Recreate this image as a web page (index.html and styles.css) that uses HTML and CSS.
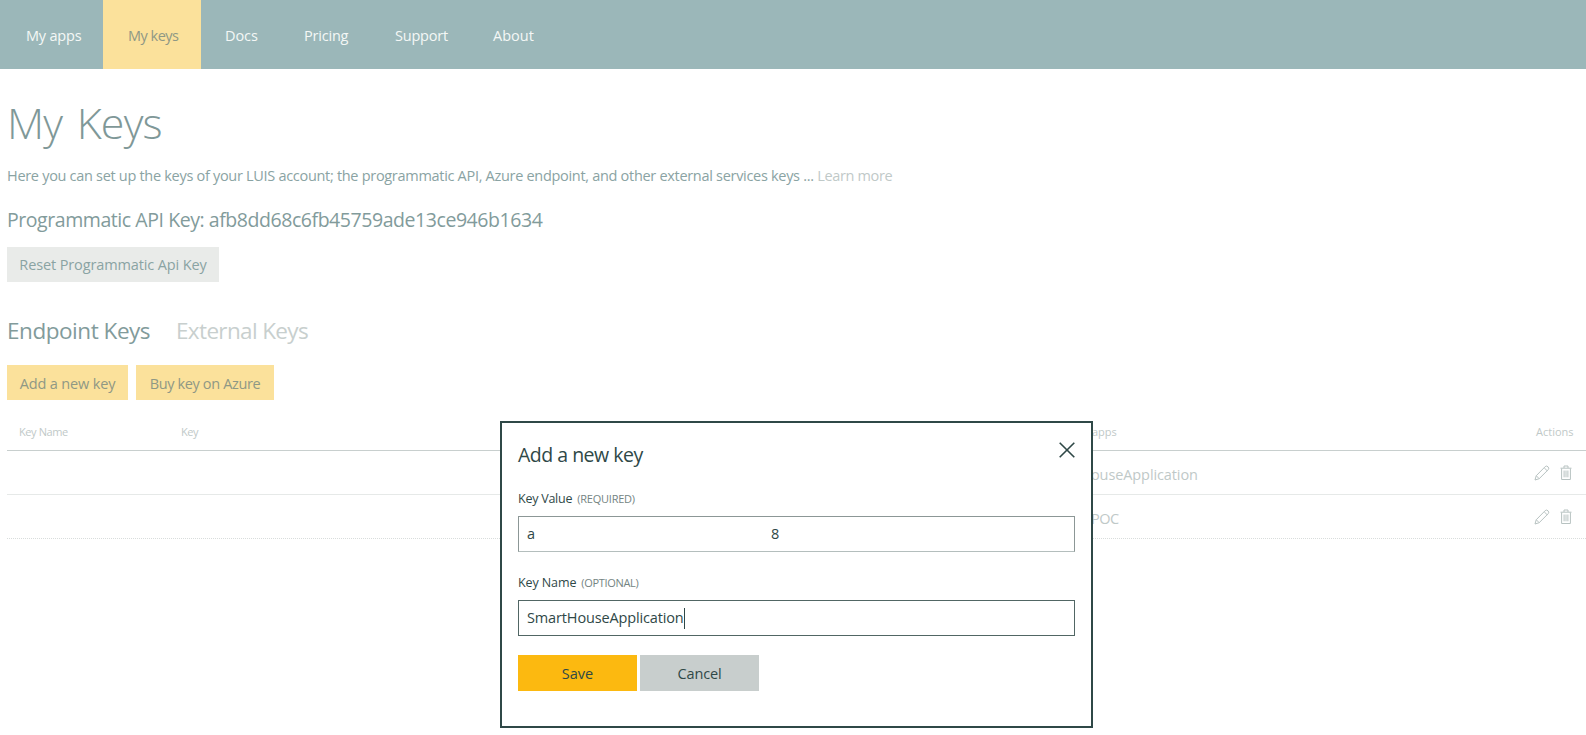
FILE: index.html
```
<!DOCTYPE html>
<html lang="en">
<head>
<meta charset="utf-8">
<title>My Keys</title>
<link rel="stylesheet" href="styles.css">
</head>
<body>
<svg class="sprite" aria-hidden="true">
  <symbol id="pencil" viewBox="0 0 16 16">
    <path d="M1 15 L2.2 10.8 L11.2 1.6 Q12.6 .4 14 1.8 Q15.4 3.2 14.3 4.6 L5.2 13.7 Z M10.2 2.8 L13.1 5.7 M2.4 10.9 L5 13.5"/>
  </symbol>
  <symbol id="trash" viewBox="0 0 12 16">
    <path d="M.5 3.2 H11.5 M4 3 V1 H8 V3 M1.6 3.5 V14.5 H10.4 V3.5 M4.1 5.5 V12.3 M6 5.5 V12.3 M7.9 5.5 V12.3"/>
  </symbol>
</svg>

<nav class="nav">
  <a class="nav-item apps">My apps</a>
  <a class="nav-item active">My keys</a>
  <a class="nav-item docs">Docs</a>
  <a class="nav-item pricing">Pricing</a>
  <a class="nav-item support">Support</a>
  <a class="nav-item about">About</a>
</nav>

<main class="page">
  <h1 class="title">My Keys</h1>
  <p class="intro">Here you can set up the keys of your LUIS account; the programmatic API, Azure endpoint, and other external services keys ... <a class="learn">Learn more</a></p>
  <h2 class="api-key">Programmatic API Key: afb8dd68c6fb45759ade13ce946b1634</h2>
  <button class="btn reset">Reset Programmatic Api Key</button>
  <div class="tabs">
    <span class="tab current">Endpoint Keys</span>
    <span class="tab external">External Keys</span>
  </div>
  <div class="buttons">
    <button class="btn add">Add a new key</button>
    <button class="btn buy">Buy key on Azure</button>
  </div>
  <div class="table">
    <div class="row head">
      <span>Key Name</span><span>Key</span><span class="assigned">apps</span><span class="actions">Actions</span>
    </div>
    <div class="row">
      <span></span><span></span><span class="app">ouseApplication</span>
      <span class="icons"><svg class="pencil"><use href="#pencil"/></svg><svg class="trash"><use href="#trash"/></svg></span>
    </div>
    <div class="row last">
      <span></span><span></span><span class="app poc">POC</span>
      <span class="icons"><svg class="pencil"><use href="#pencil"/></svg><svg class="trash"><use href="#trash"/></svg></span>
    </div>
  </div>
</main>

<section class="modal">
  <header class="modal-head">
    <h3 class="modal-title">Add a new key</h3>
    <svg class="close" viewBox="0 0 16 16"><path d="M.7 .7 L15.3 15.3 M15.3 .7 L.7 15.3"/></svg>
  </header>
  <div class="label"><b class="value-label">Key Value</b><small class="required">(REQUIRED)</small></div>
  <div class="input"><span class="first">a</span><span>8</span></div>
  <div class="label"><b class="name-label">Key Name</b><small class="optional">(OPTIONAL)</small></div>
  <div class="input focused"><span>SmartHouseApplication</span><i class="caret"></i></div>
  <div class="modal-buttons">
    <button class="btn save">Save</button>
    <button class="btn cancel">Cancel</button>
  </div>
</section>
</body>
</html>
```
FILE: styles.css
```
* { box-sizing: border-box; }

body {
  margin: 0;
  height: 735px;
  overflow: hidden;
  background: #fff;
  color: #8aa3a3;
  font: 14.5px/20px "Open Sans", "Noto Sans", sans-serif;
  white-space: nowrap;
}

h1, h2, h3, p { margin: 0; font-weight: 400; }

.sprite { display: none; }

/* Navigation */
.nav {
  display: flex;
  height: 69px;
  background: #9bb7b9;
  color: #f4f7f6;
}
.nav-item {
  display: flex;
  align-items: center;
  padding-top: 2px;
}
.apps { width: 103px; padding-left: 26px; letter-spacing: -.2px; }
.active {
  width: 98px;
  padding-left: 25px;
  background: #fbe19b;
  color: #8f9885;
  letter-spacing: -.5px;
}
.docs { width: 103px; padding-left: 24px; letter-spacing: -.1px; }
.pricing { width: 91px; letter-spacing: -.2px; }
.support { width: 98px; letter-spacing: -.22px; }
.about { letter-spacing: 0; }

/* Page */
.page { padding: 24px 0 0 7px; }
.title {
  font-size: 43px;
  font-weight: 300;
  line-height: 60px;
  letter-spacing: -.8px;
  word-spacing: 4px;
  color: #7f9898;
}
.intro { margin-top: 13px; letter-spacing: -.3px; }
.learn { color: #bfc9c8; letter-spacing: -.34px; }
.api-key {
  margin-top: 21px;
  font-size: 19.5px;
  line-height: 26px;
  letter-spacing: -.44px;
  color: #829b9b;
}

.btn {
  height: 35px;
  padding: 0;
  border: 0;
  font: inherit;
  color: inherit;
}
.reset {
  display: block;
  width: 212px;
  margin-top: 14px;
  padding-top: 1px;
  background: #e9ebe9;
  letter-spacing: -.12px;
}

.tabs {
  display: flex;
  gap: 26px;
  margin-top: 33px;
  font-size: 22.5px;
  line-height: 32px;
}
.current { width: 143px; letter-spacing: -.46px; color: #829b9b; }
.external { letter-spacing: -.64px; color: #c8cfce; }

.buttons { display: flex; gap: 8px; margin-top: 18px; }
.add, .buy { padding-top: 2px; background: #fbe19b; color: #8f9885; }
.add { width: 121px; letter-spacing: -.15px; }
.buy { width: 138px; letter-spacing: -.36px; }

/* Keys table */
.row {
  display: grid;
  grid-template-columns: 162px 905px 1fr 56px;
  align-items: center;
  height: 44px;
  padding: 2px 0 0 12px;
  border-bottom: 1px solid #e6e9e8;
  color: #bfc9c8;
}
.head {
  height: 51px;
  padding-top: 14px;
  border-bottom-color: #c8cfce;
  font-size: 11px;
  letter-spacing: -.4px;
}
.last { border-bottom: 1px dotted #d9dddc; }
.assigned { padding-left: 6px; letter-spacing: 0; }
.app { padding: 2px 0 0 5px; letter-spacing: -.1px; }
.poc { letter-spacing: -.5px; }
.actions { padding-left: 6px; letter-spacing: 0; }
.icons { display: flex; gap: 10px; align-items: center; padding: 0 0 1px 4px; }
.pencil, .trash {
  fill: none;
  stroke: #b7c2c1;
  stroke-width: 1;
  height: 16px;
}
.pencil { width: 16px; }
.trash { width: 12px; }

/* Dialog */
.modal {
  position: absolute;
  left: 500px;
  top: 421px;
  width: 593px;
  height: 307px;
  padding: 19px 16px 0 16px;
  border: 2px solid #2f4847;
  background: #fff;
  color: #2f4847;
}
.modal-head { display: flex; justify-content: space-between; }
.modal-title { font-size: 19.5px; line-height: 26px; letter-spacing: -.5px; }
.close { width: 16px; height: 16px; fill: none; stroke: currentColor; stroke-width: 1.6; }
.label {
  display: flex;
  align-items: baseline;
  gap: 5px;
  margin-top: 21px;
}
.label b { font-size: 12.5px; font-weight: 500; }
.label small { font-size: 11px; color: #748482; }
.value-label { letter-spacing: -.25px; }
.name-label { letter-spacing: -.1px; }
.required { letter-spacing: -.22px; }
.optional { letter-spacing: -.33px; }
.input {
  display: flex;
  align-items: center;
  height: 36px;
  margin-top: 7px;
  padding: 0 0 0 8px;
  border: 1px solid #8c9796;
  border-bottom-color: #b4bebd;
  letter-spacing: -.14px;
}
.first { width: 244px; }
.focused { border-color: #516664; }
.caret { width: 1px; height: 21px; background: #2f4847; }
.modal-buttons { display: flex; gap: 3px; margin-top: 19px; }
.modal-buttons .btn { height: 36px; padding-top: 1px; }
.save { width: 119px; background: #fcb910; letter-spacing: 0; }
.cancel { width: 119px; background: #c8cecd; letter-spacing: -.15px; }
```
